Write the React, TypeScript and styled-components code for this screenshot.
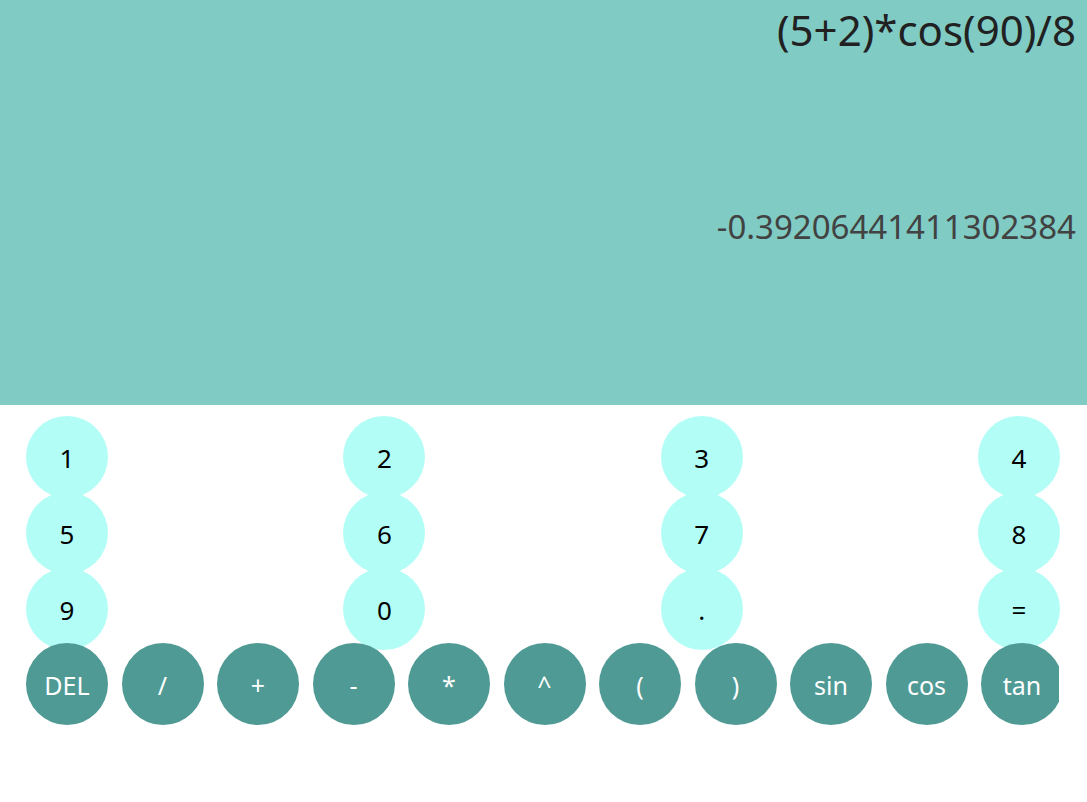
import React from "react";
import styled, { createGlobalStyle } from "styled-components";

const GlobalStyle = createGlobalStyle`
  * { box-sizing: border-box; }
  html, body { margin: 0; background: #ffffff; }
  body { font-family: "Segoe UI", "Noto Sans", "Open Sans", sans-serif; }
`;

const Calculator = styled.main`
  display: flex;
  flex-direction: column;
  min-height: 100vh;
`;

const Display = styled.section`
  min-height: 405px;
  background: #80cbc4;
  padding: 0 11px;
  text-align: right;
`;

const Expression = styled.div`
  min-height: 196px;
  line-height: 60px;
  font-size: 42px;
  color: #212121;
`;

const Result = styled.div`
  line-height: 62px;
  font-size: 33px;
  color: #424242;
`;

const Keypad = styled.section`
  padding: 11px 27px 0 26px;
`;

const DigitRow = styled.div`
  display: flex;
  justify-content: space-between;
  height: 76px;
`;

/* The operators run slightly wider than the keypad and are cut at its edge. */
const OperatorClip = styled.div`
  position: relative;
  margin: -1px 1px 0 0;
  overflow: hidden;
`;

const OperatorRow = styled.div`
  display: flex;
  justify-content: space-between;
  margin-right: -4px;
`;

const Key = styled.button<{ $operator?: boolean }>`
  flex: none;
  width: 82px;
  height: 82px;
  padding: 2px 0 0;
  border: 0;
  border-radius: 50%;
  background: ${(p) => (p.$operator ? "#4f9a94" : "#b2fef7")};
  color: ${(p) => (p.$operator ? "#ffffff" : "#000000")};
  font-family: inherit;
  font-size: ${(p) => (p.$operator ? "25px" : "26px")};
  cursor: pointer;
`;

const digits = [
  ["1", "2", "3", "4"],
  ["5", "6", "7", "8"],
  ["9", "0", ".", "="],
];
const operators = ["DEL", "/", "+", "-", "*", "^", "(", ")", "sin", "cos", "tan"];

export default function App() {
  return (
    <Calculator>
      <GlobalStyle />
      <Display>
        <Expression>(5+2)*cos(90)/8</Expression>
        <Result>-0.39206441411302384</Result>
      </Display>
      <Keypad>
        {digits.map((row) => (
          <DigitRow key={row[0]}>
            {row.map((label) => (
              <Key key={label} type="button">{label}</Key>
            ))}
          </DigitRow>
        ))}
        <OperatorClip>
          <OperatorRow>
            {operators.map((label) => (
              <Key key={label} type="button" $operator>{label}</Key>
            ))}
          </OperatorRow>
        </OperatorClip>
      </Keypad>
    </Calculator>
  );
}
